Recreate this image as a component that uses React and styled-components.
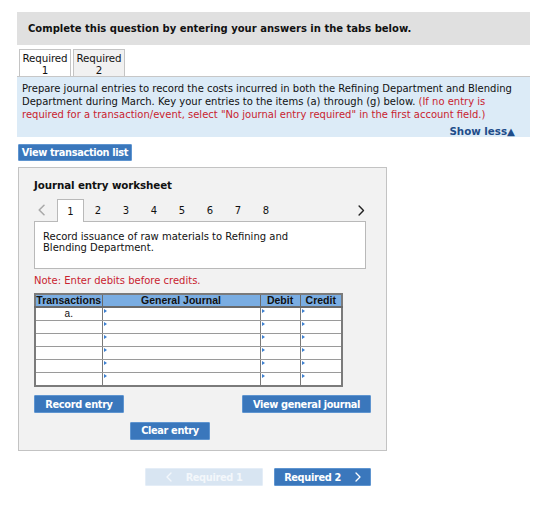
import React from "react";
import styled, { createGlobalStyle, css } from "styled-components";

const Global = createGlobalStyle`
  body {
    margin: 0;
    background: #ffffff;
    font-family: "DejaVu Sans", Verdana, sans-serif;
    color: #111;
  }
`;

const Page = styled.div`
  width: 513px;
  padding: 12px 0 0 17px;
`;

const Banner = styled.div`
  height: 33px;
  background: #e0e0e0;
  display: flex;
  align-items: center;
  padding-left: 11px;
  font-size: 10px;
  font-weight: bold;
`;

const TabRow = styled.div`
  display: flex;
  gap: 2px;
  padding: 4px 0 0 2px;
`;

const Tab = styled.div`
  width: 52px;
  height: 27px;
  box-sizing: border-box;
  border: 1px solid #c4c4c4;
  border-bottom: none;
  background: ${(p) => (p.$active ? "#ffffff" : "#f1f1f1")};
  font-size: 10.3px;
  letter-spacing: -0.1px;
  line-height: 12px;
  text-align: center;
  padding-top: 2px;
`;

const Instructions = styled.div`
  background: #dcebf7;
  border-top: 1px solid #c7c7c7;
  padding: 5px 9px 0 5px;
  height: 61px;
  box-sizing: border-box;
  font-size: 10px;
  line-height: 13px;
`;

const Warn = styled.span`
  color: #c9232f;
`;

const ShowLess = styled.div`
  text-align: right;
  padding-right: 6px;
  color: #1f4d8a;
  font-weight: bold;
  font-size: 10.3px;
  line-height: 12px;
  margin-top: 4px;
`;

const buttonBase = css`
  display: inline-flex;
  align-items: center;
  justify-content: center;
  box-sizing: border-box;
  height: 18px;
  border: 1px solid #5f95d0;
  border-radius: 1px;
  background: #3a77bc;
  color: #ffffff;
  font-family: "DejaVu Sans", Verdana, sans-serif;
  font-weight: bold;
  font-size: 9.8px;
  letter-spacing: -0.35px;
  white-space: nowrap;
  padding: 0;
`;

const Button = styled.button`
  ${buttonBase};
  width: ${(p) => p.$w}px;
`;

const ListButton = styled(Button)`
  margin: 7px 0 0 1px;
  height: 17px;
`;

const Worksheet = styled.div`
  margin: 6px 0 0 1px;
  width: 369px;
  height: 284px;
  box-sizing: border-box;
  background: #f2f2f2;
  border: 1px solid #c3c3c3;
  padding: 11px 0 0 15px;
`;

const Title = styled.div`
  font-size: 10.3px;
  font-weight: bold;
  line-height: 12px;
  letter-spacing: -0.1px;
`;

const Pager = styled.div`
  display: flex;
  align-items: flex-end;
  height: 22px;
  margin-top: 8px;
  width: 332px;
`;

const Arrow = styled.div`
  width: 23px;
  height: 22px;
  display: flex;
  align-items: center;
  justify-content: ${(p) => (p.$right ? "flex-end" : "flex-start")};
  padding-left: ${(p) => (p.$right ? "0" : "4px")};
  box-sizing: border-box;
  margin-left: ${(p) => (p.$right ? "auto" : "0")};
  padding-right: ${(p) => (p.$right ? "1px" : "0")};
`;

const PageTab = styled.div`
  width: ${(p) => (p.$active ? 27 : 28)}px;
  height: ${(p) => (p.$active ? 23 : 22)}px;
  box-sizing: border-box;
  display: flex;
  align-items: center;
  justify-content: center;
  font-size: 10px;
  margin-bottom: ${(p) => (p.$active ? -1 : 0)}px;
  background: ${(p) => (p.$active ? "#ffffff" : "transparent")};
  border: ${(p) => (p.$active ? "1px solid #b9b9b9" : "none")};
  border-bottom: none;
  position: relative;
  z-index: 1;
`;

const Description = styled.div`
  width: 332px;
  height: 48px;
  box-sizing: border-box;
  background: #ffffff;
  border: 1px solid #b9b9b9;
  padding: 9px 8px 0 8px;
  font-size: 10px;
  line-height: 11px;
`;

const Note = styled.div`
  margin-top: 5px;
  color: #c9232f;
  font-size: 10px;
  line-height: 13px;
`;

const Grid = styled.table`
  margin-top: 6px;
  width: 307px;
  border-collapse: collapse;
  border: 2px solid #7b7b7b;
  font-family: "Liberation Sans", Arial, sans-serif;
  table-layout: fixed;
`;

const HeadCell = styled.th`
  background: #7aade2;
  height: 11px;
  padding: 0;
  font-size: 10.5px;
  font-weight: bold;
  line-height: 11px;
  border: 1px solid #6a6a6a;
  border-bottom: 2px solid #6a6a6a;
  text-align: center;
  color: #111;
`;

const Cell = styled.td`
  height: 12px;
  padding: 0;
  background: #ffffff;
  border: 1px solid #9a9a9a;
  border-left-color: #7a7a7a;
  border-right-color: #7a7a7a;
  font-size: 10px;
  line-height: 11px;
  text-align: center;
  vertical-align: top;
  position: relative;
  ${(p) =>
    p.$select &&
    css`
      &::before {
        content: "";
        position: absolute;
        left: 1px;
        top: 1px;
        border-left: 3px solid #3c7fcf;
        border-top: 2px solid transparent;
        border-bottom: 2px solid transparent;
      }
    `}
`;

const ActionRow = styled.div`
  display: flex;
  justify-content: space-between;
  width: 337px;
  margin-top: 8px;
`;

const ClearRow = styled.div`
  margin: 6px 0 0 96px;
`;

const NavRow = styled.div`
  display: flex;
  gap: 11px;
  margin: 17px 0 0 128px;
`;

const NavButton = styled.button`
  ${buttonBase};
  width: ${(p) => p.$w}px;
  height: 18px;
  gap: 14px;
  ${(p) =>
    p.$disabled &&
    css`
      background: #d8e5f2;
      border-color: #e4edf7;
      color: #f3f7fb;
    `}
`;

const Chevron = ({ dir = "right", size = 9, color = "currentColor" }) => (
  <svg width={size * 0.6} height={size} viewBox="0 0 6 10" fill="none">
    <path
      d={dir === "right" ? "M1 1 L5 5 L1 9" : "M5 1 L1 5 L5 9"}
      stroke={color}
      strokeWidth="1.3"
      strokeLinecap="round"
      strokeLinejoin="round"
    />
  </svg>
);

const pages = [1, 2, 3, 4, 5, 6, 7, 8];
const rows = ["a.", "", "", "", "", ""];

export default function App() {
  return (
    <>
      <Global />
      <Page>
        <Banner>Complete this question by entering your answers in the tabs below.</Banner>
        <TabRow>
          <Tab $active>
            Required
            <br />1
          </Tab>
          <Tab>
            Required
            <br />2
          </Tab>
        </TabRow>
        <Instructions>
          Prepare journal entries to record the costs incurred in both the Refining Department and Blending
          Department during March. Key your entries to the items (a) through (g) below.{" "}
          <Warn>
            (If no entry is required for a transaction/event, select "No journal entry required" in the first account
            field.)
          </Warn>
          <ShowLess>Show less▲</ShowLess>
        </Instructions>

        <ListButton $w={114}>View transaction list</ListButton>

        <Worksheet>
          <Title>Journal entry worksheet</Title>
          <Pager>
            <Arrow>
              <Chevron dir="left" size={12} color="#a9a9a9" />
            </Arrow>
            {pages.map((n) => (
              <PageTab key={n} $active={n === 1}>
                {n}
              </PageTab>
            ))}
            <Arrow $right>
              <Chevron dir="right" size={11} color="#222" />
            </Arrow>
          </Pager>
          <Description>
            Record issuance of raw materials to Refining and
            <br />
            Blending Department.
          </Description>
          <Note>Note: Enter debits before credits.</Note>
          <Grid>
            <colgroup>
              <col style={{ width: 67 }} />
              <col style={{ width: 158 }} />
              <col style={{ width: 40 }} />
              <col style={{ width: 42 }} />
            </colgroup>
            <thead>
              <tr>
                <HeadCell>Transactions</HeadCell>
                <HeadCell>General Journal</HeadCell>
                <HeadCell>Debit</HeadCell>
                <HeadCell>Credit</HeadCell>
              </tr>
            </thead>
            <tbody>
              {rows.map((label, i) => (
                <tr key={i}>
                  <Cell>{label}</Cell>
                  <Cell $select />
                  <Cell $select />
                  <Cell $select />
                </tr>
              ))}
            </tbody>
          </Grid>
          <ActionRow>
            <Button $w={90}>Record entry</Button>
            <Button $w={129}>View general journal</Button>
          </ActionRow>
          <ClearRow>
            <Button $w={80}>Clear entry</Button>
          </ClearRow>
        </Worksheet>

        <NavRow>
          <NavButton $w={118} $disabled>
            <Chevron dir="left" size={10} />
            Required 1
          </NavButton>
          <NavButton $w={97}>
            Required 2
            <Chevron dir="right" size={10} />
          </NavButton>
        </NavRow>
      </Page>
    </>
  );
}
